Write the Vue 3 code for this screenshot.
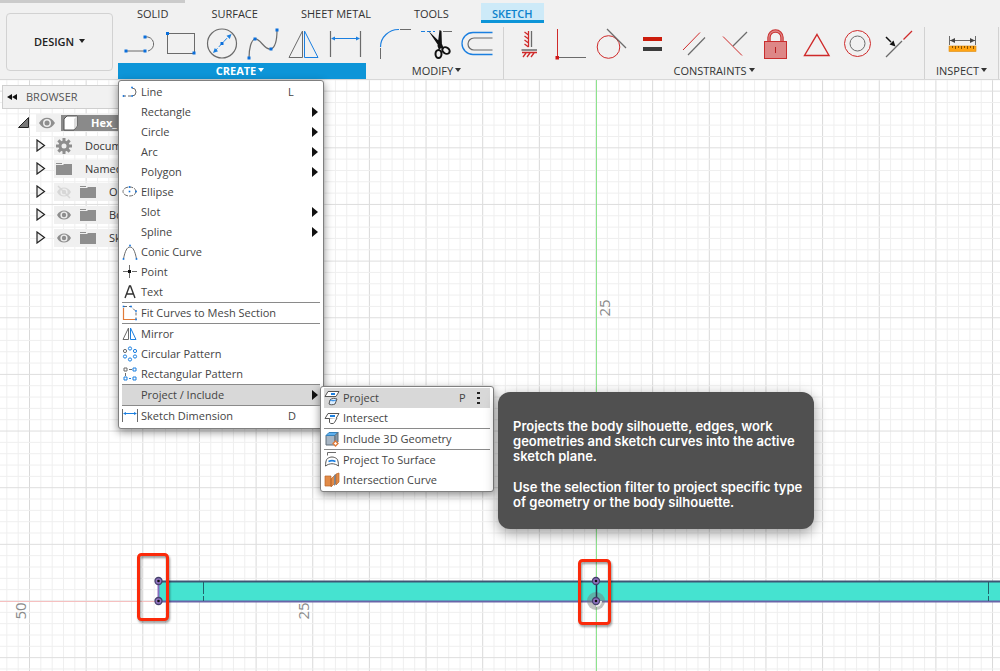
<script setup>
const tabs = ['SOLID', 'SURFACE', 'SHEET METAL', 'TOOLS', 'SKETCH']

const G = 'stroke="#6b6b6b" fill="none"'
const B = 'stroke="#1b7fe0" fill="none"'
const R = 'stroke="#cf2a2a" fill="none"'
const dots = (...pts) => pts.map(([x, y]) => `<rect x="${x - 1.5}" y="${y - 1.5}" width="3" height="3" fill="#0a6fdc"/>`).join('')
const dotsSmall = (...pts) => pts.map(([x, y]) => `<rect x="${x - 0.8}" y="${y - 0.8}" width="1.6" height="1.6" fill="#0a6fdc"/>`).join('')

const toolArt = {
  line: `<path ${G} d="M6 24H25M25 10a7 7 0 0 1 3 14"/>${dots([6, 24], [25, 24], [25, 10])}`,
  rectangle: `<rect ${G} x="6.500" y="6.500" width="27" height="20"/>${dots([6.5, 6.5], [33, 26])}`,
  circle: `<circle ${G} cx="20" cy="16.500" r="14.500" stroke-width="1.200"/><path ${B} stroke-dasharray="5 2" d="M12 25L28 8"/><path fill="#1b7fe0" d="M29.500 7l-5 1.800 3.300 3.300zM11 26l1.800-5 3.300 3.300z"/>${dots([20, 16.5])}`,
  spline: `<path ${G} stroke-width="1.200" d="M6 31C6 22 8 13 12 12C17 11 22 24 28 22C33 20 34 10 34 3"/>${dots([6, 31], [12, 12], [28, 22], [34, 3])}`,
  mirror: `<path ${G} d="M5 30.500L18.500 4V30.500z"/><path ${B} d="M20.500 4V30.500H34z"/>`,
  dimension: `<path ${G} stroke-width="1.200" d="M5.500 4V30M35.500 4V30"/><path ${B} d="M7 11.500H34"/><path fill="#1b7fe0" d="M6 11.500l4-2v4zM35 11.500l-4-2v4z"/>`,
  fillet: `<path ${B} stroke-width="1.200" d="M5.500 20A18 17.500 0 0 1 24 2.500"/><path ${G} d="M25 2.500H36M5.500 21V32"/>`,
  trim: `<path ${B} stroke-dasharray="4 2" d="M5 4.500H19"/><path ${G} d="M27 4.500H36"/><path fill="#111" d="M12.500 4L26 17l2 5-4-1zM23.500 3l2 1 .5 16-3 3-1.500-4z"/><ellipse cx="22.500" cy="27" rx="3" ry="4" stroke="#111" stroke-width="2" fill="none"/><ellipse cx="30" cy="23.500" rx="4" ry="3" transform="rotate(35 30 23.500)" stroke="#111" stroke-width="2" fill="none"/>`,
  offset: `<path ${B} stroke-width="1.300" d="M35.500 5.500H16a11 11 0 0 0 0 22H35.500"/><path ${G} stroke-width="1.200" d="M35.500 11H17a6 6 0 0 0 0 12H35.500"/>`,
  horizontal: `<path ${R} stroke-width="1.300" d="M19.500 4V20M19.500 8l-4-3M19.500 12l-4-3M19.500 16l-4-3M19.500 20l-4-3M13 25.500H28M17 26l-3 4M21 26l-3 4M25 26l-3 4"/><path ${G} stroke-width="1.300" d="M22.500 4V20M12.500 23H28"/>`,
  coincident: `<path ${R} d="M7.500 2V30"/><path ${G} d="M8 30.500H36"/><rect x="5.500" y="29" width="3.500" height="3.500" fill="#d01818"/>`,
  tangent: `<circle ${R} cx="17.500" cy="20" r="11.300"/><path ${G} stroke-width="1.200" d="M16 2L35 21"/>`,
  equal: `<path fill="#cc1c0c" d="M11 10h19v4H11z"/><path fill="#3c3c3c" d="M11 20h19v4H11z"/>`,
  parallel: `<path ${R} d="M10 23L27 5.500"/><path ${G} stroke-width="1.200" d="M15 28L32 10.500"/>`,
  perpendicular: `<path ${R} d="M9 9.500L28 28.500"/><path ${G} stroke-width="1.200" d="M19 19L33 5"/>`,
  lock: `<path fill="none" stroke="#c92f2f" stroke-width="3.400" d="M14 14V10.500a6.500 6.500 0 0 1 13 0V14"/><path fill="none" stroke="#df8585" stroke-width="1.300" d="M14 14V10.500a6.500 6.500 0 0 1 13 0V14"/><rect x="9.500" y="14.500" width="22" height="17" fill="#de8787" stroke="#c92f2f"/><path stroke="#b81f1f" d="M20.500 20v6"/>`,
  polygon: `<path ${R} stroke-width="1.400" d="M21 7.500L33 28.500H8.500z"/>`,
  concentric: `<circle ${R} cx="20.500" cy="16.500" r="13"/><circle ${G} cx="20.500" cy="16.500" r="7.500"/>`,
  curvature: `<path ${G} stroke-width="1.200" d="M8 30L24 14"/><path ${R} stroke-width="1.200" d="M25.500 12.500L34 4"/><path stroke="#111" stroke-width="1.500" d="M8 10l5 5"/><path fill="#111" d="M17.500 19.500l-6-2 4-4z"/>`,
  measure: `<path ${G} d="M8.500 9V18M34.500 9V18M9 13.500H34"/><path fill="#444" d="M9 13.500l5-2.500v5zM34 13.500l-5-2.500v5z"/><rect x="8" y="19" width="27" height="5.500" fill="#ffa414" stroke="#dd8b10" stroke-width=".6"/><path stroke="#8a5300" d="M11.500 19v2M14.500 19v3M17.500 19v2M20.500 19v3M23.500 19v2M26.500 19v3M29.500 19v2M32.500 19v3"/>`,
}

const groups = [
  { name: 'CREATE', active: true, tools: ['line', 'rectangle', 'circle', 'spline', 'mirror', 'dimension'] },
  { name: 'MODIFY', tools: ['fillet', 'trim', 'offset'] },
  { name: 'CONSTRAINTS', tools: ['horizontal', 'coincident', 'tangent', 'equal', 'parallel', 'perpendicular', 'lock', 'polygon', 'concentric', 'curvature'] },
  { name: 'INSPECT', tools: ['measure'] },
]

/* Menu glyphs are drawn on a 16 x 16 grid. */
const menuArt = {
  line: `<path ${G} d="M1 12h10" stroke-dasharray="3 2"/><path ${G} d="M10 4a4 4 0 0 1 0 8"/>${dotsSmall([1.5, 12], [10, 12], [10, 3.5])}`,
  ellipse: `<ellipse ${G} cx="7.500" cy="7.500" rx="6.500" ry="4.500" stroke-dasharray="4 1"/>${dotsSmall([7.5, 3], [14, 7.5], [7.5, 7.5])}`,
  conic: `<path ${G} d="M1.500 15C3 7 5 3 8 3s5 4 6.500 12"/>${dotsSmall([1.5, 15], [8, 1.5], [14.5, 15])}`,
  point: `<path ${G} d="M1 7.500h5M10 7.500h5M7.500 1v5M7.500 9v5"/><rect x="6" y="6" width="3" height="3" fill="#111"/>`,
  text: `<path fill="none" stroke="#333" stroke-width="1.400" d="M3 14L7.500 2h1L13 14M4.500 10h7"/>`,
  fit: `<path ${G} stroke-dasharray="3 2" d="M2 1.500h7l5 5v8"/><path fill="none" stroke="#e07b39" stroke-width="1.200" d="M1.500 3V14.500H13"/>${dotsSmall([1.5, 1.5], [9, 1.5], [14, 6], [14, 14.5])}`,
  mirror: `<path ${G} d="M1 13.500L6.500 2V13.500z"/><path ${B} d="M8.500 2V13.500H14z"/>`,
  circular: [[8, 2.5], [13, 5], [13, 10.5], [8, 13.5], [3, 10.5]].map(([x, y]) => `<circle ${B} cx="${x}" cy="${y}" r="1.600"/>`).join('') + `<circle ${G} cx="3" cy="5" r="1.600"/>`,
  rectangular: `<path ${G} d="M2 2h3v3H2zM7 3.500h3M3.500 7v3"/><path ${B} d="M11 2h3v3h-3zM2 11h3v3H2zM11 11h3v3h-3zM7 12.500h2"/>`,
  dimension: `<path ${G} d="M.5 1V14M15.500 1V14"/><path ${B} d="M2 5.500H14"/><path fill="#1b7fe0" d="M1 5.500l3-1.500v3zM15 5.500l-3-1.500v3z"/>`,
  project: `<path fill="#fff" stroke="#555" d="M4 1.500h11l-3 5H1z"/><path stroke="#1b7fe0" stroke-width="2" d="M7 4h4"/><path fill="#dceeff" stroke="#555" d="M6 10c2-2 5-2 7-1l-2 5c-2 1-5 1-6 0z"/><path ${B} d="M6 10c2 1 4 1 6 0"/>`,
  intersect: `<path fill="#fff" stroke="#555" d="M4 3.500h11l-3 5H1z"/><path stroke="#1b7fe0" stroke-width="2" d="M6 6h5"/><path fill="#fff" stroke="#555" d="M5.500 8.500v4c1 1.500 4 1.500 5 0L13 8"/>`,
  include: `<path fill="#a8b6c4" stroke="#5e6c78" d="M2 4.500h9V14H2z"/><path fill="#5fb0ee" stroke="#3583bd" d="M2 4.500L5 1.500h9l-3 3z"/><path fill="#8797a5" stroke="#5e6c78" d="M11 4.500l3-3V11l-3 3z"/><path fill="#fff" stroke="#e07b39" stroke-width="1.300" d="M11.500 10l2.500 2.500-2.500 2.500L9 12.500z"/>`,
  surface: `<path ${G} d="M3.500 3.500V.5H12"/><path fill="#fff" stroke="#555" d="M1.500 14c0-4 1-7 2-7.500 3-2 6-2 9 0 1 .5 2 3.500 2 7.500-4-3-9-3-13 0z"/><path stroke="#1b7fe0" stroke-width="1.500" fill="none" d="M4.500 9.500c2-1 5-1 7 0"/>`,
  curve: `<path fill="#e28b47" stroke="#b9642a" stroke-width=".7" d="M1 4h6v10H1zM7 7l4-4v8l-4 4z"/><path fill="#7d8795" d="M10 3l2-1v10l-2 2z"/><path fill="#e28b47" stroke="#b9642a" stroke-width=".7" d="M12 2l3-1v9l-3 3z"/>`,
}

const menu = [
  { label: 'Line', icon: 'line', key: 'L' },
  { label: 'Rectangle', more: true },
  { label: 'Circle', more: true },
  { label: 'Arc', more: true },
  { label: 'Polygon', more: true },
  { label: 'Ellipse', icon: 'ellipse' },
  { label: 'Slot', more: true },
  { label: 'Spline', more: true },
  { label: 'Conic Curve', icon: 'conic' },
  { label: 'Point', icon: 'point' },
  { label: 'Text', icon: 'text' },
  { label: 'Fit Curves to Mesh Section', icon: 'fit', rule: true },
  { label: 'Mirror', icon: 'mirror', rule: true },
  { label: 'Circular Pattern', icon: 'circular' },
  { label: 'Rectangular Pattern', icon: 'rectangular' },
  { label: 'Project / Include', more: true, open: true, rule: true },
  { label: 'Sketch Dimension', icon: 'dimension', key: 'D', rule: true },
]

const submenu = [
  { label: 'Project', icon: 'project', key: 'P', open: true },
  { label: 'Intersect', icon: 'intersect' },
  { label: 'Include 3D Geometry', icon: 'include', rule: true },
  { label: 'Project To Surface', icon: 'surface', rule: true },
  { label: 'Intersection Curve', icon: 'curve' },
]

const tree = [
  { label: 'Docum', gear: true },
  { label: 'Named' },
  { label: 'O', eye: 'off' },
  { label: 'Bo', eye: 'on' },
  { label: 'Sk', eye: 'on' },
]

const originX = 596
const originY = 521
const step = 11.33
const cols = Array.from({ length: 260 }, (_, i) => i - 60).map(n => ({ at: originX + n * step, major: n % 5 === 0 }))
const rows = Array.from({ length: 150 }, (_, i) => i - 46).map(n => ({ at: originY + n * step, major: n % 5 === 0 }))
const teeth = [0, 45, 90, 135, 180, 225, 270, 315]
</script>

<template>
  <div class="app">
    <header class="toolbar">
      <div class="title-strip"></div>
      <button class="workspace">DESIGN <i class="caret"></i></button>
      <div class="ribbon">
        <nav class="tabs">
          <button v-for="t in tabs" :key="t" class="tab" :class="{ current: t === 'SKETCH' }">{{ t }}</button>
        </nav>
        <div class="groups">
          <section v-for="g in groups" :key="g.name" class="group" :class="{ active: g.active }">
            <div class="tools">
              <button v-for="t in g.tools" :key="t" class="tool" :aria-label="t">
                <svg width="41" height="34" viewBox="0 0 41 34" v-html="toolArt[t]"></svg>
              </button>
            </div>
            <button class="group-label">{{ g.name }}<i class="caret"></i></button>

            <div v-if="g.active" class="menu create-menu">
              <div v-for="m in menu" :key="m.label" class="entry" :class="{ rule: m.rule }">
                <button class="item" :class="{ open: m.open }">
                  <svg class="glyph" width="16" height="16" viewBox="0 0 16 16" v-html="m.icon ? menuArt[m.icon] : ''"></svg>
                  <span class="name">{{ m.label }}</span>
                  <span v-if="m.key" class="key">{{ m.key }}</span>
                  <i v-if="m.more" class="more"></i>
                </button>
                <div v-if="m.open" class="menu sub-menu">
                  <div v-for="s in submenu" :key="s.label" class="entry" :class="{ rule: s.rule }">
                    <button class="item" :class="{ open: s.open }">
                      <svg class="glyph" width="16" height="16" viewBox="0 0 16 16" v-html="menuArt[s.icon]"></svg>
                      <span class="name">{{ s.label }}</span>
                      <span v-if="s.key" class="key">{{ s.key }}</span>
                      <svg v-if="s.open" class="kebab" width="3" height="12" viewBox="0 0 3 12">
                        <path fill="#222" d="M0 0h3v2H0zM0 5h3v2H0zM0 10h3v2H0z" />
                      </svg>
                    </button>
                  </div>
                  <div class="tip" role="tooltip">
                    <p>Projects the body silhouette, edges, work geometries and sketch curves into the active sketch plane.</p>
                    <p>Use the selection filter to project specific type of geometry or the body silhouette.</p>
                  </div>
                </div>
              </div>
            </div>
          </section>
        </div>
      </div>
    </header>

    <main class="stage">
      <svg class="sketch" width="100%" height="100%">
        <g fill="none">
          <line v-for="c in cols" :key="'c' + c.at" :x1="c.at" :x2="c.at" y1="0" y2="100%" :stroke="c.major ? '#d9d9d9' : '#efefef'" />
          <line v-for="r in rows" :key="'r' + r.at" :y1="r.at" :y2="r.at" x1="0" x2="100%" :stroke="r.major ? '#dedede' : '#efefef'" />
          <line x1="596.5" x2="596.5" y1="0" y2="100%" stroke="#8de48d" />
          <line x1="0" x2="159" y1="521.5" y2="521.5" stroke="#f6c0c0" />
        </g>
        <rect x="159" y="501" width="100%" height="20" fill="#45e3d0" />
        <path d="M159 501.500H4000" stroke="#3f5674" stroke-width="2" />
        <path d="M159 521.500H4000" stroke="#6a65a8" stroke-width="2" />
        <path d="M203.500 502v19M988.500 502v19" stroke="#23616b" stroke-dasharray="12 2" />
        <path d="M158.500 501v20" stroke="#8a6bbd" stroke-width="2" />
        <circle cx="596" cy="521" r="9" fill="#777" fill-opacity=".45" />
        <path d="M596 521h6a6 6 0 0 1-6 6z" fill="#eee" />
        <path d="M596.500 501v20" stroke="#2a2f4a" stroke-width="1.500" />
        <g v-for="p in [[158.5, 501], [158.5, 521], [596, 501], [596, 521]]" :key="p.join()">
          <circle :cx="p[0]" :cy="p[1]" r="3.500" fill="#9273c2" stroke="#45416b" stroke-width="1.300" />
          <circle :cx="p[0]" :cy="p[1]" r="1.300" fill="#111" />
        </g>
        <g class="marks" fill="none" stroke="#fb2a0a" stroke-width="3">
          <rect x="138.500" y="474.500" width="29" height="65" rx="3" />
          <rect x="579.500" y="480.500" width="30" height="63" rx="3" />
        </g>
        <g class="scale" text-anchor="middle">
          <text transform="translate(26 531) rotate(-90)">50</text>
          <text transform="translate(309 531) rotate(-90)">25</text>
          <text transform="translate(610 228) rotate(-90)">25</text>
        </g>
      </svg>

      <aside class="browser">
        <h2><svg width="10" height="6" viewBox="0 0 10 6"><path fill="#111" d="M5 0v6L0 3zM10 0v6L5 3z" /></svg>BROWSER</h2>
        <div class="row root">
          <svg width="11" height="11" viewBox="0 0 11 11"><path fill="#777" stroke="#222" d="M10.500.5v10H.5z" /></svg>
          <div class="strip">
            <svg width="16" height="12" viewBox="0 0 16 12"><path fill="#8e8e8e" d="M0 6C4-1 12-1 16 6 12 13 4 13 0 6z" /><circle cx="8" cy="6" r="4" fill="#eee" /><circle cx="8" cy="6" r="2.500" fill="#8e8e8e" /></svg>
            <div class="selected">
              <svg width="16" height="16" viewBox="0 0 16 16"><path fill="#fff" stroke="#555" d="M1 4l3-3h10v10l-3 4H1z" /><path fill="#ddd" d="M11 4l3-3v10l-3 3.500z" /></svg>
              <b>Hex_</b>
            </div>
          </div>
        </div>
        <div v-for="n in tree" :key="n.label" class="row">
          <svg width="10" height="13" viewBox="0 0 10 13"><path fill="#eee" stroke="#222" stroke-width="1.200" d="M1 1v11l7.500-5.500z" /></svg>
          <div class="strip">
            <svg v-if="n.eye" width="16" height="14" viewBox="0 0 16 14" :class="{ faded: n.eye === 'off' }">
              <path fill="#8e8e8e" d="M1 7C4 1 12 1 15 7 12 13 4 13 1 7z" /><circle cx="8" cy="7" r="3.600" fill="#eee" /><circle cx="8" cy="7" r="2.200" fill="#8e8e8e" />
              <path v-if="n.eye === 'off'" stroke="#8e8e8e" stroke-width="1.500" d="M2 1l12 12" />
            </svg>
            <svg v-if="n.gear" width="16" height="16" viewBox="0 0 16 16">
              <rect v-for="a in teeth" :key="a" x="6.500" y="0" width="3" height="4" fill="#8e8e8e" :transform="`rotate(${a} 8 8)`" />
              <circle cx="8" cy="8" r="4" fill="none" stroke="#8e8e8e" stroke-width="3" />
            </svg>
            <svg v-else width="16" height="14" viewBox="0 0 16 14"><path fill="#8e8e8e" d="M0 1h6v1H0zM0 3h7l1-1h8v11H0z" /></svg>
            <span>{{ n.label }}</span>
          </div>
        </div>
      </aside>
    </main>
  </div>
</template>

<style>
body { margin: 0; }
</style>

<style scoped>
.app { display: flex; flex-direction: column; min-height: 100vh; overflow: hidden; background: #fff; color: #333; font: 11px/16px "Open Sans", "Noto Sans", sans-serif; }
button { margin: 0; padding: 0; border: 0; background: none; color: inherit; font: inherit; }
svg { display: block; flex: none; }
.toolbar { position: relative; z-index: 2; display: flex; gap: 5px; padding: 3px 0 0 6px; background: #f1f1f1; border-bottom: 1px solid #d8d8d8; }
.title-strip { position: absolute; top: 0; left: 0; width: 185px; height: 3px; background: #cbcbcb; }
.workspace { width: 107px; height: 58px; margin-top: 10px; border: 1px solid #d2d2d2; border-radius: 4px; font-weight: 600; color: #222; flex: none; }
.caret { display: inline-block; margin-left: 2px; border: 3px solid transparent; border-top: 4px solid currentColor; border-bottom: 0; vertical-align: 3px; }
.ribbon { flex: 1; min-width: 0; }
.tabs { display: flex; gap: 21px; padding-left: 8px; height: 20px; }
.tab { padding: 3px 11px 0; border-bottom: 3px solid transparent; white-space: nowrap; }
.tab.current { background: #cdeaf8; border-color: #0d95d8; color: #0c82cc; font-weight: 600; }
.groups { display: flex; padding-top: 4px; }
.group { position: relative; padding: 0 5px 0 4px; border-right: 1px solid #d2d2d2; }
.group:nth-child(3) { padding: 0 5px; }
.group:last-child { flex: 0 1 73px; padding: 0; }
.group:last-child .tools { justify-content: center; }
.group.active { padding: 0; margin-right: 5px; border: 0; }
.group.active .tools { padding: 0 0 0 2px; }
.tools { display: flex; height: 36px; }
.tool { width: 41px; height: 34px; flex: none; }
.group-label { display: block; width: 100%; height: 16px; color: #333; }
.active .group-label { width: 248px; padding-right: 4px; background: #0d95d8; color: #fff; font-weight: 700; }

.menu { position: absolute; box-sizing: border-box; padding: 1px 3px; border: 1px solid #808080; border-radius: 3px; background: #fff; box-shadow: 0 3px 8px rgba(0, 0, 0, .45); color: #444; }
.create-menu { top: 100%; left: 0; width: 206px; margin-top: 1px; padding-bottom: 2px; }
.entry { position: relative; }
.entry.rule { border-top: 1px solid #8a8a8a; }
.item { display: flex; align-items: center; width: 100%; height: 20px; text-align: left; white-space: nowrap; }
.item.open { background: #d8d8d8; }
.glyph { margin: 0 3px 0 0; }
.name { flex: 1; }
.key { width: 32px; }
.more { width: 0; margin-right: 2px; border: 5px solid transparent; border-left: 6px solid #111; border-right: 0; }
.sub-menu { left: 100%; top: 1px; width: 174px; }
.sub-menu .key { width: 18px; }
.kebab { margin-right: 10px; }
.tip { position: absolute; left: 100%; top: 5px; margin-left: 5px; width: 316px; box-sizing: border-box; padding: 27px 4px 19px 15px; border-radius: 12px; background: #505050; box-shadow: 0 4px 14px rgba(0, 0, 0, .4); color: #fff; font: 600 13px/15px Inter, sans-serif; }
.tip p { margin: 0; }
.tip p + p { margin-top: 16px; }

.stage { position: relative; flex: 1; }
.sketch { position: absolute; inset: 0; }
.marks { filter: drop-shadow(1px 2px 1px rgba(0, 0, 0, .4)); }
.scale { fill: #8a8a8a; font: 15px "Open Sans", sans-serif; }

.browser { position: relative; box-sizing: border-box; width: 118px; padding: 5px 0 0 2px; color: #333; }
.browser h2 { display: flex; align-items: center; gap: 9px; height: 22px; margin: 0 0 2px; padding-left: 4px; border: 1px solid #cfcfcf; border-right: 0; background: #f1f1f1; font: inherit; color: #555; }
.row { display: flex; align-items: center; gap: 8px; height: 23px; padding-left: 34px; white-space: nowrap; }
.root { gap: 7px; padding-left: 16px; }
.strip { display: flex; align-items: center; flex: 1; min-width: 0; gap: 8px; height: 18px; padding-left: 2px; background: #f0f0f0; }
.strip span { padding-left: 5px; }
.root .strip { gap: 6px; padding-left: 3px; }
.selected { display: flex; align-items: center; gap: 12px; flex: 1; min-width: 0; height: 16px; padding-left: 2px; background: #8a8a8a; color: #fff; }
.faded { opacity: .25; }
</style>
